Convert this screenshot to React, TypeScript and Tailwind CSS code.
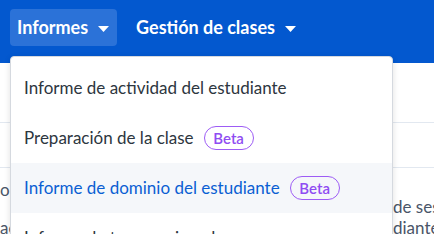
import React from "react";

type Item = { label: string; beta?: boolean; active?: boolean };

const items: Item[] = [
  { label: "Informe de actividad del estudiante" },
  { label: "Preparación de la clase", beta: true },
  { label: "Informe de dominio del estudiante", beta: true, active: true },
  { label: "Informe de tareas asignadas" },
];

function Caret() {
  return (
    <svg width="11" height="6" viewBox="0 0 11 6" className="ml-[10px] mt-[2px]">
      <path d="M0 0h11L5.5 6z" fill="white" />
    </svg>
  );
}

function Beta() {
  return (
    <span className="ml-[10px] inline-flex h-[24px] w-[50px] items-center justify-center rounded-full border-[1.5px] border-[#9d5cf5] text-[15px] font-semibold text-[#8f4cf2]">
      Beta
    </span>
  );
}

export default function App() {
  return (
    <div className="relative h-[234px] w-[434px] overflow-hidden bg-white font-['Lato',sans-serif]">
      <header className="flex h-[63px] items-start bg-[#0358cf] pl-[10px] pt-[9px]">
        <button className="flex h-[37px] items-center rounded-[4px] bg-[#2b72d8] pl-[7px] pr-[8px] text-[18px] font-bold text-white">
          Informes
          <Caret />
        </button>
        <button className="ml-[11px] flex h-[37px] items-center px-[8px] text-[18px] font-bold text-white">
          Gestión de clases
          <Caret />
        </button>
      </header>

      <div className="h-[60px] border-b border-[#e2e8f0]" />
      <div className="h-[45px] border-b border-[#e2e8f0]" />
      <div className="flex text-[17px] leading-[20px] text-[#4a5568]">
        <div className="w-[393px] shrink-0 pt-[12px] whitespace-nowrap">
          <p>o t</p>
          <p className="mt-[18px]">ac</p>
        </div>
        <div className="pt-[29px] whitespace-nowrap">
          <p>de sesiones</p>
          <p className="mt-[1px]">diante</p>
        </div>
      </div>

      <div className="absolute left-[10px] top-[56px] w-[383px] rounded-[4px] border border-[#d5d9df] bg-white pt-[6px] shadow-[0_2px_6px_rgba(0,0,0,0.12)]">
        {items.map((it) => (
          <div
            key={it.label}
            className={
              it.active
                ? "flex h-[50px] items-center bg-[#f5f7fa] pl-[13px] text-[17px] text-[#0b5fd3]"
                : "flex h-[50px] items-center pl-[13px] text-[17px] text-[#2d3640]"
            }
          >
            {it.label}
            {it.beta && <Beta />}
          </div>
        ))}
      </div>
    </div>
  );
}
